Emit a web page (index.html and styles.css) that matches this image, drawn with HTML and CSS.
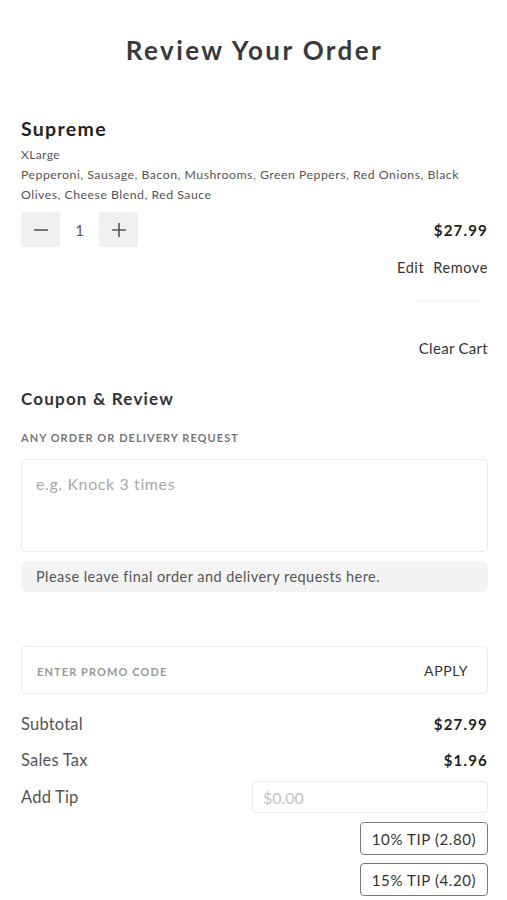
FILE: index.html
```html
<!DOCTYPE html>
<html>
<head>
<meta charset="utf-8">
<link rel="stylesheet" href="styles.css">
</head>
<body>
<div class="page">
  <h1 class="title">Review Your Order</h1>

  <section class="item">
    <h2 class="item-name">Supreme</h2>
    <div class="item-size">XLarge</div>
    <div class="item-toppings">Pepperoni, Sausage, Bacon, Mushrooms, Green Peppers, Red Onions, Black Olives, Cheese Blend, Red Sauce</div>
    <div class="item-row">
      <div class="qty">
        <button class="qty-btn" aria-label="decrease">
          <svg width="16" height="16" viewBox="0 0 16 16"><path d="M1 8h14" stroke="#555" stroke-width="1.6" fill="none"/></svg>
        </button>
        <span class="qty-num">1</span>
        <button class="qty-btn" aria-label="increase">
          <svg width="16" height="16" viewBox="0 0 16 16"><path d="M1 8h14M8 1v14" stroke="#555" stroke-width="1.6" fill="none"/></svg>
        </button>
      </div>
      <div class="price">$27.99</div>
    </div>
    <div class="item-actions"><span>Edit</span><span>Remove</span></div>
    <div class="faint-bar"></div>
  </section>

  <div class="clear-row"><span class="clear">Clear Cart</span></div>

  <section class="coupon">
    <h3 class="section-title">Coupon &amp; Review</h3>
    <div class="label">ANY ORDER OR DELIVERY REQUEST</div>
    <div class="textarea"><span class="placeholder">e.g. Knock 3 times</span></div>
    <div class="note">Please leave final order and delivery requests here.</div>

    <div class="promo">
      <span class="promo-ph">ENTER PROMO CODE</span>
      <span class="apply">APPLY</span>
    </div>

    <div class="sum-row first"><span class="sum-label">Subtotal</span><span class="sum-val">$27.99</span></div>
    <div class="sum-row"><span class="sum-label">Sales Tax</span><span class="sum-val">$1.96</span></div>
    <div class="tip-row"><span class="sum-label">Add Tip</span><div class="tip-input">$0.00</div></div>
    <div class="tip-buttons">
      <button class="tip-btn">10% TIP (2.80)</button>
      <button class="tip-btn">15% TIP (4.20)</button>
    </div>
  </section>
</div>
</body>
</html>
```

FILE: styles.css
```css
* { box-sizing: border-box; }
html, body { margin: 0; padding: 0; background: #fff; }
body { font-family: "Lato", "Noto Sans", sans-serif; color: #333; }
.page { padding: 36px 19px 0 21px; }

.title {
  margin: 0;
  text-align: center;
  font-size: 26px;
  font-weight: 700;
  letter-spacing: 2.4px;
  color: #3a3a3a;
  line-height: 28px;
}

.item { margin-top: 53px; }
.item-name { margin: 0; font-size: 19.5px; font-weight: 700; color: #222; line-height: 24px; letter-spacing: 1.3px; }
.item-size { font-size: 12px; color: #555; line-height: 20px; margin-top: 4px; letter-spacing: 0.4px; }
.item-toppings { font-size: 12.3px; color: #555; line-height: 20px; letter-spacing: 0.5px; }
.item-row { display: flex; justify-content: space-between; align-items: center; margin-top: 7px; }
.qty { display: flex; align-items: center; }
.qty-btn {
  width: 39px; height: 35px; border: 0; background: #f0f0f0; border-radius: 2px;
  display: flex; align-items: center; justify-content: center; padding: 0;
}
.qty-num { width: 39px; text-align: center; font-size: 15px; color: #555; }
.price { font-size: 15px; font-weight: 700; color: #222; letter-spacing: 1.2px; }
.item-actions { display: flex; justify-content: flex-end; gap: 9px; margin-top: 11px; font-size: 14.5px; color: #333; letter-spacing: 0.6px; line-height: 20px; }
.faint-bar { margin: 22px 8px 0 auto; width: 65px; height: 2px; background: #f7f7f7; }

.clear-row { display: flex; justify-content: flex-end; margin-top: 36px; }
.clear { font-size: 15px; color: #333; letter-spacing: 0.3px; line-height: 20px; }

.coupon { margin-top: 30px; }
.section-title { margin: 0; font-size: 17px; font-weight: 700; color: #333; line-height: 22px; letter-spacing: 1.2px; }
.label { margin-top: 21px; font-size: 11px; font-weight: 700; color: #777; letter-spacing: 1.05px; line-height: 14px; }
.textarea {
  margin-top: 14px; height: 93px; border: 1px solid #ececec; border-radius: 4px;
  padding: 14px 14px;
}
.placeholder { font-size: 16px; color: #aaa; letter-spacing: 0.6px; }
.note {
  margin-top: 9px; height: 31px; background: #f4f4f4; border-radius: 6px;
  padding: 0 15px; display: flex; align-items: center; font-size: 14.5px; color: #555; letter-spacing: 0.45px;
}

.promo {
  margin-top: 54px; height: 48px; border: 1px solid #ececec; border-radius: 4px;
  display: flex; align-items: center; justify-content: space-between; padding: 0 19px 0 15px;
}
.promo-ph { font-size: 11px; font-weight: 700; color: #999; letter-spacing: 1.1px; margin-top: 3px; }
.apply { font-size: 14px; color: #333; letter-spacing: 0.6px; }

.sum-row { display: flex; justify-content: space-between; align-items: center; height: 36px; }
.sum-row.first { margin-top: 12px; }
.sum-label { font-size: 16.5px; color: #555; letter-spacing: 0.2px; }
.sum-val { font-size: 15px; font-weight: 700; color: #222; letter-spacing: 1.2px; }
.tip-row { display: flex; justify-content: space-between; align-items: center; margin-top: 3px; }
.tip-input {
  width: 236px; height: 32px; border: 1px solid #ececec; border-radius: 4px;
  padding: 0 10px; display: flex; align-items: center; font-size: 16px; color: #c4c4c4;
}
.tip-buttons { display: flex; flex-direction: column; align-items: flex-end; gap: 8px; margin-top: 9px; }
.tip-btn {
  width: 128px; height: 33px; border: 1px solid #777; border-radius: 4px; background: #fff;
  font-family: "Lato", "Noto Sans", sans-serif; font-size: 15px; color: #333; letter-spacing: 0.6px; padding: 0;
}
```
